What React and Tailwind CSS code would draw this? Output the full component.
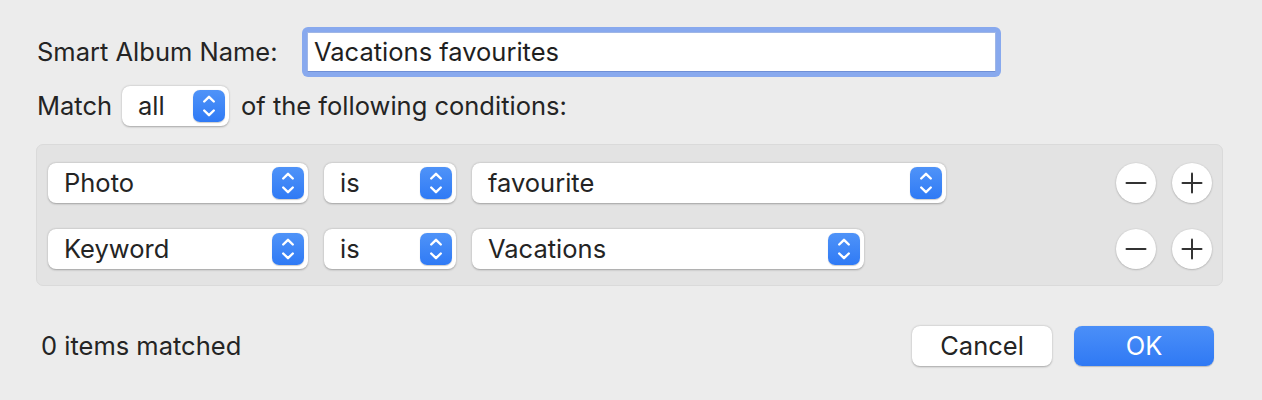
import React from 'react';

const font = { fontFamily: 'Inter, "Liberation Sans", sans-serif' };

const Stepper = () => (
  <div className="w-[32px] h-[32px] rounded-[7px] bg-gradient-to-b from-[#4f93f8] to-[#2f7af5] flex items-center justify-center shadow-[0_0.5px_1px_rgba(0,0,0,0.2)]">
    <svg width="14" height="24" viewBox="0 0 14 24" fill="none" stroke="white" strokeWidth="2.4" strokeLinecap="round" strokeLinejoin="round">
      <path d="M2.2 7.5 L7 2.8 L11.8 7.5" />
      <path d="M2.2 16.5 L7 21.2 L11.8 16.5" />
    </svg>
  </div>
);

const Popup = ({ label, width }) => (
  <div className={`${width} h-[40px] bg-white rounded-[8px] shadow-[0_0.5px_2px_rgba(0,0,0,0.3)] flex items-center pl-[16px] pr-[4px] shrink-0`}>
    <span className="flex-1 text-[25.5px] text-[#242424]">{label}</span>
    <Stepper />
  </div>
);

const RoundButton = ({ plus }) => (
  <div className="w-[40px] h-[40px] rounded-full bg-white shadow-[0_0.5px_2px_rgba(0,0,0,0.3)] flex items-center justify-center">
    <svg width="22" height="22" viewBox="0 0 22 22" stroke="#333" strokeWidth="2" strokeLinecap="round">
      <path d="M1.5 11 H20.5" />
      {plus && <path d="M11 1.5 V20.5" />}
    </svg>
  </div>
);

const ConditionRow = ({ field, value, valueWidth }) => (
  <div className="flex items-center h-[40px]">
    <Popup label={field} width="w-[260px]" />
    <div className="ml-[16px]"><Popup label="is" width="w-[132px]" /></div>
    <div className="ml-[16px]"><Popup label={value} width={valueWidth} /></div>
    <div className="ml-auto flex gap-[16px]">
      <RoundButton />
      <RoundButton plus />
    </div>
  </div>
);

export default function App() {
  return (
    <div className="w-[1262px] h-[400px] bg-[#ececec] pt-[27px] text-[#242424]" style={font}>
      <div className="flex items-center h-[50px] pl-[37px]">
        <span className="w-[265px] text-[25.5px]">Smart Album Name:</span>
        <div className="w-[699px] h-[50px] rounded-[6px] bg-[#88a9ee] p-[5px]">
          <div className="w-full h-full bg-white border border-[#9fb6e6] border-b-[#6f8fd6] flex items-center pl-[6px] text-[25.5px] text-[#1f1f1f]">
            Vacations favourites
          </div>
        </div>
      </div>

      <div className="flex items-center h-[40px] pl-[37px] mt-[9px]">
        <span className="w-[85px] text-[25.5px]">Match</span>
        <Popup label="all" width="w-[107px]" />
        <span className="ml-[12px] text-[25.5px]">of the following conditions:</span>
      </div>

      <div className="ml-[36px] mt-[18px] w-[1187px] h-[142px] rounded-[7px] bg-[#e3e3e3] border border-[#dadada] pt-[18px] pl-[11px] pr-[10px] flex flex-col gap-[26px]">
        <ConditionRow field="Photo" value="favourite" valueWidth="w-[474px]" />
        <ConditionRow field="Keyword" value="Vacations" valueWidth="w-[392px]" />
      </div>

      <div className="flex items-center h-[40px] mt-[40px] pl-[41px] pr-[48px]">
        <span className="text-[25.5px]">0 items matched</span>
        <button className="ml-auto w-[140px] h-[40px] rounded-[8px] bg-white shadow-[0_0.5px_2px_rgba(0,0,0,0.3)] text-[25.5px] text-[#242424]">Cancel</button>
        <button className="ml-[22px] w-[140px] h-[40px] rounded-[8px] bg-gradient-to-b from-[#4b8ff8] to-[#2f79f4] text-[25.5px] text-white shadow-[0_0.5px_1px_rgba(0,0,0,0.2)]">OK</button>
      </div>
    </div>
  );
}
